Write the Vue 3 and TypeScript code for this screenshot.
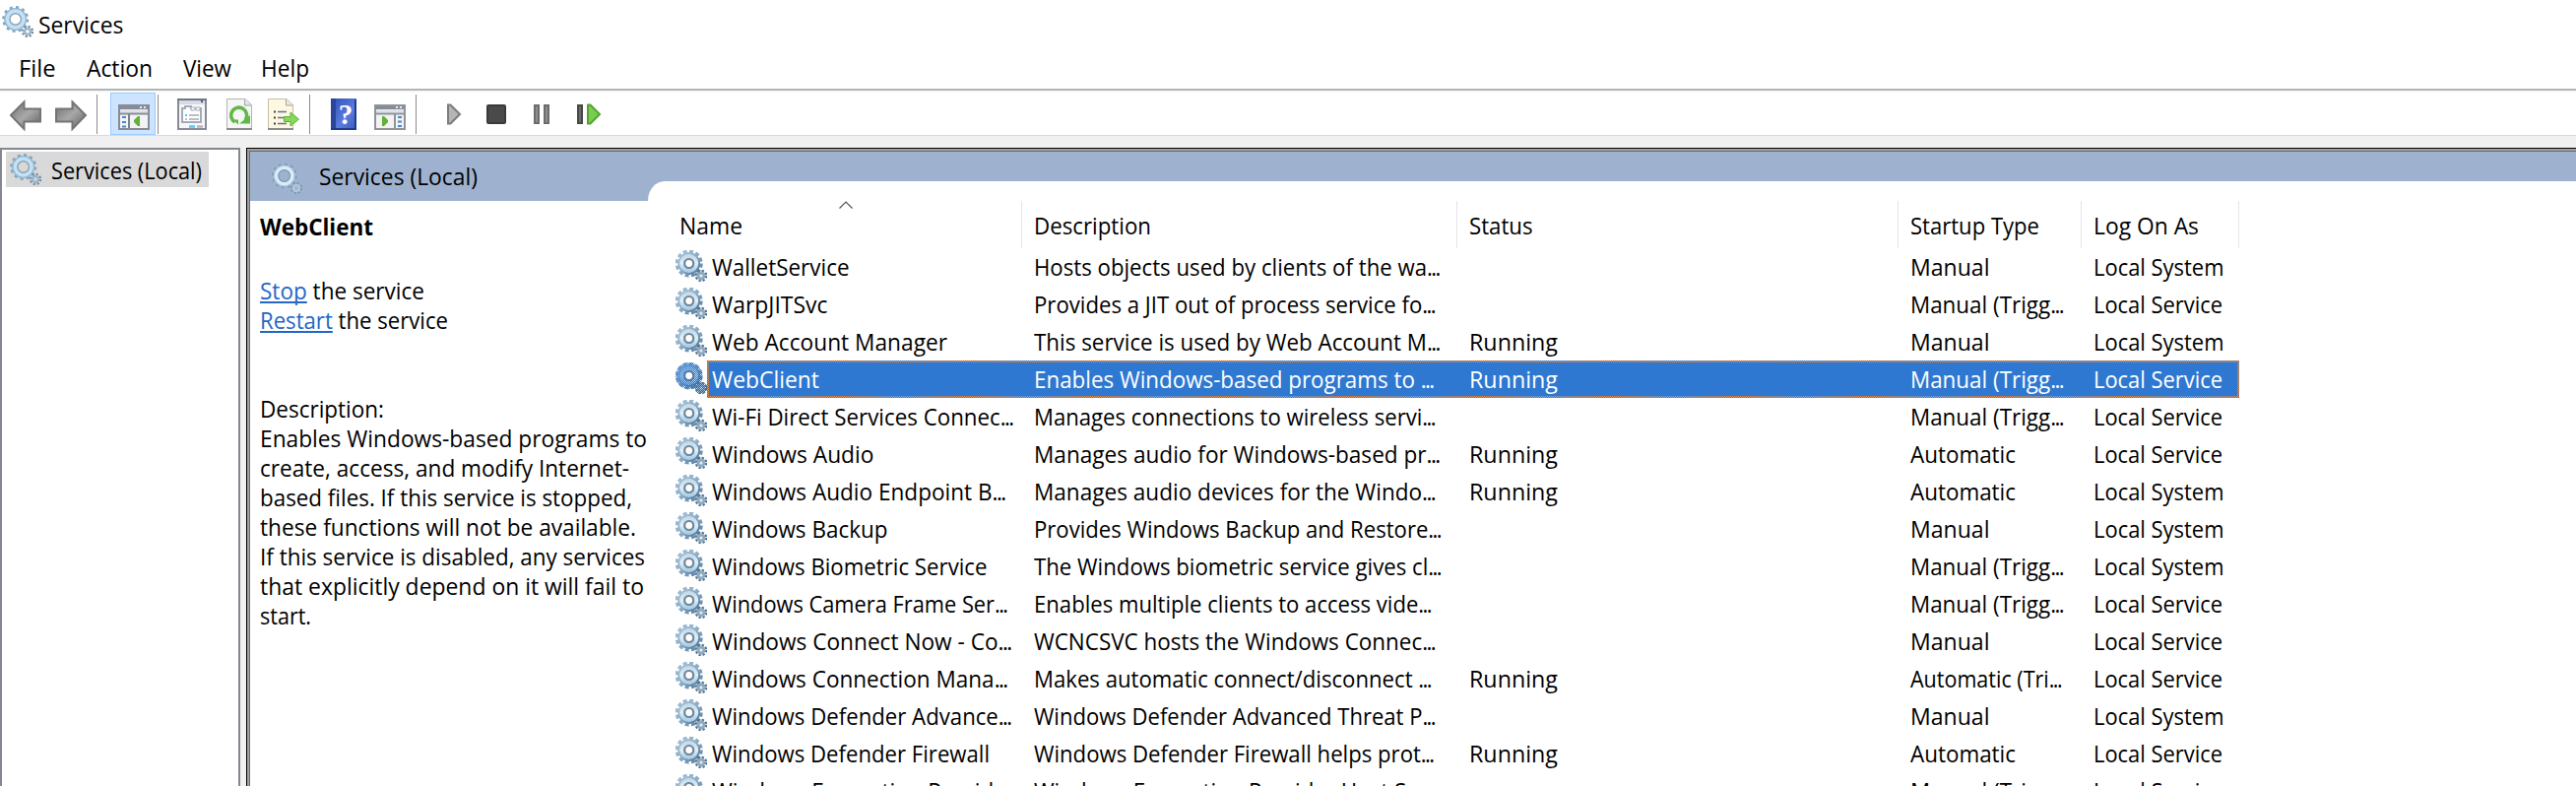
<script setup lang="ts">
import type { Directive } from 'vue'

interface Label { text: string; w: number }
interface Service {
  name: Label
  desc: Label
  running: boolean
  startup: string
  account: string
}

/* Condenses a label horizontally so that it occupies the given width. */
const vFit: Directive<HTMLElement, number> = {
  mounted(el, { value }) {
    const natural = el.getBoundingClientRect().width
    if (natural > 0) el.style.transform = `scaleX(${value / natural})`
  },
}

const body = (t: string) => t.replace(/\.\.\.$/, '')
const cut = (t: string) => t.endsWith('...')

const widths: Record<string, number> = {
  'Manual': 80.5,
  'Manual (Trigg...': 155,
  'Automatic': 107,
  'Automatic (Tri...': 153,
  'Local System': 132.5,
  'Local Service': 131,
}

/* Clipped labels end in narrow dots that carry no trailing space. */
const label = (text: string, w: number): Label => ({ text, w: cut(text) ? w - 2 : w })

const svc = (name: string, nw: number, desc: string, dw: number, running: boolean, startup: string, account: string): Service => ({
  name: label(name, nw),
  desc: label(desc, dw),
  running,
  startup,
  account: `Local ${account}`,
})

const services: Service[] = [
  svc('WalletService', 139.5, 'Hosts objects used by clients of the wa...', 413.7, false, 'Manual', 'System'),
  svc('WarpJITSvc', 117.5, 'Provides a JIT out of process service fo...', 409, false, 'Manual (Trigg...', 'Service'),
  svc('Web Account Manager', 239, 'This service is used by Web Account M...', 413.7, true, 'Manual', 'System'),
  svc('WebClient', 109, 'Enables Windows-based programs to ...', 407.5, true, 'Manual (Trigg...', 'Service'),
  svc('Wi-Fi Direct Services Connec...', 307.5, 'Manages connections to wireless servi...', 409, false, 'Manual (Trigg...', 'Service'),
  svc('Windows Audio', 164.5, 'Manages audio for Windows-based pr...', 413.5, true, 'Automatic', 'Service'),
  svc('Windows Audio Endpoint B...', 299.5, 'Manages audio devices for the Windo...', 409, true, 'Automatic', 'System'),
  svc('Windows Backup', 178.5, 'Provides Windows Backup and Restore...', 415, false, 'Manual', 'System'),
  svc('Windows Biometric Service', 279.5, 'The Windows biometric service gives cl...', 415, false, 'Manual (Trigg...', 'System'),
  svc('Windows Camera Frame Ser...', 301.5, 'Enables multiple clients to access vide...', 405, false, 'Manual (Trigg...', 'Service'),
  svc('Windows Connect Now - Co...', 305.5, 'WCNCSVC hosts the Windows Connec...', 409, false, 'Manual', 'Service'),
  svc('Windows Connection Mana...', 301.5, 'Makes automatic connect/disconnect ...', 405, true, 'Automatic (Tri...', 'Service'),
  svc('Windows Defender Advance...', 305.5, 'Windows Defender Advanced Threat P...', 409, false, 'Manual', 'System'),
  svc('Windows Defender Firewall', 282, 'Windows Defender Firewall helps prot...', 407.5, true, 'Automatic', 'Service'),
  svc('Windows Encryption Provid...', 301, 'Windows Encryption Provider Host S...', 393, false, 'Manual (Trigg...', 'Service'),
]
const selected = 'WebClient'

const details: Label[] = [
  { text: 'Description:', w: 126 },
  { text: 'Enables Windows-based programs to', w: 393 },
  { text: 'create, access, and modify Internet-', w: 375 },
  { text: 'based files. If this service is stopped,', w: 378 },
  { text: 'these functions will not be available.', w: 382 },
  { text: 'If this service is disabled, any services', w: 391 },
  { text: 'that explicitly depend on it will fail to', w: 390 },
  { text: 'start.', w: 52 },
]
</script>

<template>
  <div class="window">
    <svg class="defs" width="0" height="0" aria-hidden="true">
      <defs>
        <linearGradient id="rim" x1="0" y1="0" x2="1" y2="1">
          <stop offset="0" stop-color="#a3bfd6" />
          <stop offset=".5" stop-color="#8babc6" />
          <stop offset="1" stop-color="#587e9f" />
        </linearGradient>
        <linearGradient id="face" x1="0" y1="0" x2="0" y2="1">
          <stop offset="0" stop-color="#c5dcea" />
          <stop offset=".5" stop-color="#dff0f8" />
          <stop offset="1" stop-color="#a9cfe8" />
        </linearGradient>
        <linearGradient id="arrowFill" x1="0" y1="0" x2="1" y2="1">
          <stop offset="0" stop-color="#6e6e6e" />
          <stop offset=".5" stop-color="#a8a8a8" />
          <stop offset="1" stop-color="#5c5c5c" />
        </linearGradient>
        <linearGradient id="bookFill" x1="0" y1="0" x2="1" y2="1">
          <stop offset="0" stop-color="#2f50b4" />
          <stop offset=".6" stop-color="#5b7cdd" />
          <stop offset="1" stop-color="#3457b8" />
        </linearGradient>
        <pattern id="dither" width="2" height="2" patternUnits="userSpaceOnUse">
          <path d="M0 0h1v1H0zM1 1h1v1H1z" fill="#1d6fd0" />
        </pattern>
        <symbol id="gear" viewBox="0 0 32 32">
          <circle cx="13.700" cy="13.500" r="12" fill="none" stroke="url(#rim)" stroke-width="4" stroke-dasharray="3.900 2.380" />
          <circle cx="13.700" cy="13.500" r="8" fill="none" stroke="url(#rim)" stroke-width="6.800" />
          <circle cx="13.700" cy="13.500" r="7.500" fill="none" stroke="url(#face)" stroke-width="4" />
          <circle cx="13.700" cy="13.500" r="4.500" fill="#fff" stroke="#76879a" stroke-width="2.200" />
          <circle cx="26" cy="26" r="5" fill="none" stroke="#54718c" stroke-width="2.600" stroke-dasharray="2.200 1.730" />
          <circle cx="26" cy="26" r="3" fill="#e6eff4" stroke="#8eaabf" stroke-width="3" />
        </symbol>
        <symbol id="gearLight" viewBox="0 0 32 32">
          <circle cx="13.700" cy="13.500" r="12" fill="none" stroke="#86a3bd" stroke-width="3" stroke-dasharray="3 3.280" />
          <circle cx="13.700" cy="13.500" r="8.700" fill="none" stroke="#8fb3d0" stroke-width="5.600" />
          <circle cx="13.700" cy="13.500" r="8.200" fill="none" stroke="#c3e1f4" stroke-width="4" />
          <circle cx="13.700" cy="13.500" r="5.700" fill="none" stroke="#8fa3b5" stroke-width="1.400" />
          <circle cx="26" cy="26" r="5" fill="none" stroke="#6f8ba6" stroke-width="2.400" stroke-dasharray="2 1.930" />
          <circle cx="26" cy="26" r="3" fill="none" stroke="#9db6c9" stroke-width="2.600" />
        </symbol>
        <symbol id="gearPale" viewBox="0 0 32 32">
          <circle cx="13.700" cy="13.500" r="11.600" fill="none" stroke="#7e98b6" stroke-width="2.400" stroke-dasharray="2.600 3.470" />
          <circle cx="13.700" cy="13.500" r="8.500" fill="none" stroke="#a9c6dd" stroke-width="5" />
          <circle cx="13.700" cy="13.500" r="8.200" fill="none" stroke="#d9edf8" stroke-width="3.200" />
          <circle cx="13.700" cy="13.500" r="5.800" fill="none" stroke="#8399b2" stroke-width="1.200" />
          <circle cx="26" cy="26" r="5" fill="none" stroke="#7e98b3" stroke-width="2.400" stroke-dasharray="2 1.930" />
          <circle cx="26" cy="26" r="3" fill="none" stroke="#b3c9da" stroke-width="2.200" />
        </symbol>
      </defs>
    </svg>

    <header class="titlebar">
      <svg class="gear title-icon"><use href="#gearLight" /></svg>
      <span v-fit="86.5" class="t">Services</span>
    </header>

    <nav class="menubar">
      <div class="menu m-file"><span v-fit="37.5" class="t">File</span></div>
      <div class="menu m-action"><span v-fit="67" class="t">Action</span></div>
      <div class="menu m-view"><span v-fit="49" class="t">View</span></div>
      <div class="menu m-help"><span v-fit="49" class="t">Help</span></div>
    </nav>

    <div class="toolbar">
      <svg width="440" height="45" viewBox="0 92 440 45" class="tools-a">
        <!-- back / forward -->
        <path d="M11 117 24.5 103.500V110.500H41V123.500H24.500V131z" fill="url(#arrowFill)" stroke="#747474" stroke-width="2" />
        <path d="M87 117 73.500 103.500V110.500H57V123.500H73.500V131z" fill="url(#arrowFill)" stroke="#747474" stroke-width="2" />
        <path d="M98.500 96v40M160.500 96v40M314.500 96v40M422.500 96v40" stroke="#8c8c8c" />
        <!-- console tree toggle -->
        <rect x="112.500" y="94.500" width="45" height="42" fill="#cce4ff" stroke="#99ccff" />
        <g>
          <rect x="121" y="107" width="30" height="24" fill="#f3f3f3" stroke="#868b96" stroke-width="2" />
          <path d="M122 109.500h28" stroke="#868b96" stroke-width="3" />
          <path d="M142 108h2v2h-2zM146 108h2v2h-2z" fill="#e6eaf5" />
          <path d="M122 113h28" stroke="#dce1ea" stroke-width="3" />
          <path d="M122 115.500h28" stroke="#868b96" stroke-width="2" />
          <path d="M131 116v14" stroke="#7a8190" stroke-width="2" />
          <path d="M124 119h4M124 124h4M124 128.500h4" stroke="#4a86cc" stroke-width="2" />
          <path d="M142 118v10h-2l-4-4v-2l4-4z" fill="#62b03a" />
        </g>
        <!-- properties -->
        <rect x="181" y="101" width="28" height="30" fill="#f7f7f7" stroke="#868b96" stroke-width="2" />
        <path d="M180 101h30" stroke="#6f7882" stroke-width="2" />
        <path d="M182 104h26" stroke="#d7dce4" stroke-width="4" />
        <path d="M204 102h2v2h-2z" fill="#405a86" />
        <path d="M185 110h3v-2h6v2h10v14h-19z" fill="#fff" stroke="#a5aabb" stroke-width="2" />
        <path d="M194 109h4v3h-4zM199 109h4v3h-4z" fill="#fff" stroke="#a5aabb" />
        <path d="M188 117h2" stroke="#56c5f5" stroke-width="2" />
        <path d="M192 117h10M188 121h2M192 121h10" stroke="#a5aaae" stroke-width="1.500" />
        <path d="M192 128.500h6" stroke="#56c5f5" stroke-width="2.500" />
        <path d="M200 128.500h6" stroke="#b6b6b6" stroke-width="2.500" />
        <!-- refresh -->
        <path d="M230.500 100.500H249l6.500 6V131.500h-25z" fill="#f6f6f6" stroke="#b3b3b3" />
        <path d="M230 131h26" stroke="#8a8a8a" stroke-width="2" />
        <path d="M248.500 101v6h7" fill="#e6e6e6" stroke="#a5a5a5" />
        <path d="M238.500 124a8 8 0 1 1 10.500-2" fill="none" stroke="#62b846" stroke-width="3.600" />
        <path d="M243 125.500h11v-8.500z" fill="#62b846" />
        <path d="M236 121.500l6 0v5z" fill="#62b846" />
        <!-- export list -->
        <path d="M272.500 100.500H291l6.500 6V131.500h-25z" fill="#fdf8e2" stroke="#c4bda7" />
        <path d="M272 131h26" stroke="#8e8b85" stroke-width="2" />
        <path d="M290.500 101v6h7" fill="#efe9d6" stroke="#a5a5a5" />
        <path d="M278 113.500h2M278 119.500h2M278 125.500h2" stroke="#444" stroke-width="2" />
        <path d="M282 113.500h9M282 119.500h6M282 125.500h9" stroke="#6b6b86" stroke-width="1.600" />
        <path d="M288.500 118.500h6.500v-4.500l8.500 7-8.500 7v-4.500h-6.500z" fill="#86d95a" stroke="#5cae3b" />
        <!-- help -->
        <path d="M336 100h26v32h-26z" fill="url(#bookFill)" />
        <path d="M336 100h5v32h-5z" fill="#2c449b" />
        <path d="M336 131h26M361 101v30" stroke="#1f3b8c" stroke-width="2" />
        <text x="351" y="126" class="q">?</text>
        <!-- action pane toggle -->
        <g>
          <rect x="381" y="107" width="30" height="24" fill="#f3f3f3" stroke="#8f949a" stroke-width="2" />
          <path d="M382 109.500h28" stroke="#868b96" stroke-width="3" />
          <path d="M402 108h2v2h-2zM406 108h2v2h-2z" fill="#e6eaf5" />
          <path d="M382 113h28" stroke="#dce1ea" stroke-width="3" />
          <path d="M382 115.500h28" stroke="#8f949a" stroke-width="2" />
          <path d="M401 116v14" stroke="#8f949a" stroke-width="2" />
          <path d="M404 119h4M404 123.500h4M404 128h4" stroke="#4a86cc" stroke-width="2" />
          <path d="M388 118v10h2l4-4v-2l-4-4z" fill="#62b03a" />
        </g>
      </svg>
      <svg width="200" height="45" viewBox="440 92 200 45" class="tools-b">
        <path d="M455 106.500v19h2.500L467 116l-9.500-9.500z" fill="#b5b5b5" stroke="#7c7c7c" stroke-width="2" />
        <rect x="495" y="107" width="18" height="18" rx="1" fill="#4a4a4a" stroke="#3a3a3a" stroke-width="2" />
        <path d="M543 107h4v18h-4zM553 107h4v18h-4z" fill="#8e8e8e" stroke="#6c6c6c" stroke-width="2" />
        <path d="M587 107h4v18h-4z" fill="#6a6a6a" stroke="#484848" stroke-width="2" />
        <path d="M597 106.500v19h2.500L609 116l-9.500-9.500z" fill="#78cf4e" stroke="#55a332" stroke-width="2" />
      </svg>
    </div>

    <main class="workspace">
      <aside class="tree">
        <div class="tree-item">
          <svg class="gear"><use href="#gearLight" /></svg>
          <span v-fit="153" class="t">Services (Local)</span>
        </div>
      </aside>

      <section class="pane">
        <div class="banner">
          <div class="banner-label">
            <svg class="gear"><use href="#gearPale" /></svg>
            <span v-fit="161" class="t">Services (Local)</span>
          </div>
          <div class="tab-edge"></div>
        </div>

        <div class="content">
          <div class="info">
            <h2><span v-fit="115" class="t">WebClient</span></h2>
            <p class="actions">
              <span v-fit="167" class="t"><a>Stop</a> the service</span>
              <span v-fit="191" class="t"><a>Restart</a> the service</span>
            </p>
            <p class="details">
              <span v-for="d in details" :key="d.text" v-fit="d.w" class="t">{{ d.text }}</span>
            </p>
          </div>

          <div class="list">
            <div class="head">
              <div class="th th-name">
                <svg class="sort" width="14" height="8" viewBox="0 0 14 8"><path d="M.5 7.500 7 1l6.500 6.500" fill="none" stroke="#555" stroke-width="1.200" /></svg>
                <span v-fit="64" class="t">Name</span>
              </div>
              <div class="th"><span v-fit="119" class="t">Description</span></div>
              <div class="th"><span v-fit="64.500" class="t">Status</span></div>
              <div class="th"><span v-fit="131" class="t">Startup Type</span></div>
              <div class="th"><span v-fit="107" class="t">Log On As</span></div>
            </div>

            <div v-for="s in services" :key="s.name.text" class="row" :class="{ selected: s.name.text === selected }">
              <svg class="gear" viewBox="0 0 32 32">
                <use href="#gear" />
                <template v-if="s.name.text === selected">
                  <circle cx="13.700" cy="13.500" r="8.800" fill="none" stroke="url(#dither)" stroke-width="9.600" />
                  <circle cx="26" cy="26" r="6" fill="url(#dither)" />
                </template>
              </svg>
              <div class="cells">
                <div class="td"><span v-fit="s.name.w" class="t">{{ body(s.name.text) }}<i v-if="cut(s.name.text)">...</i></span></div>
                <div class="td"><span v-fit="s.desc.w" class="t">{{ body(s.desc.text) }}<i v-if="cut(s.desc.text)">...</i></span></div>
                <div class="td"><span v-if="s.running" v-fit="90" class="t">Running</span></div>
                <div class="td"><span v-fit="widths[s.startup]" class="t">{{ body(s.startup) }}<i v-if="cut(s.startup)">...</i></span></div>
                <div class="td"><span v-fit="widths[s.account]" class="t">{{ s.account }}</span></div>
              </div>
            </div>
          </div>
        </div>
      </section>
    </main>
  </div>
</template>

<style>
body {
  margin: 0;
  overflow: hidden;
}
</style>

<style scoped>
.window {
  width: 2616px;
  height: 798px;
  overflow: hidden;
  display: flex;
  flex-direction: column;
  background: #fff;
  color: #000;
  font-family: "Open Sans", "Noto Sans", sans-serif;
  font-size: 23.5px;
  line-height: 38px;
}
.defs {
  position: absolute;
}
.t {
  display: inline-block;
  flex: none;
  white-space: pre;
  transform-origin: 0 50%;
}
.t i {
  font-style: normal;
  letter-spacing: -1.7px;
}
.gear {
  width: 32px;
  height: 32px;
  flex: none;
}

.titlebar {
  height: 50px;
  box-sizing: border-box;
  padding: 6px 0 0 2px;
  display: flex;
}
.title-icon {
  margin: 0 5px 0 0;
}
.menubar {
  display: flex;
  height: 40px;
  box-sizing: content-box;
  padding-left: 19px;
  border-bottom: 2px solid #b4b4b4;
  line-height: 39px;
}
.m-file { width: 69px; }
.m-action { width: 98px; }
.m-view { width: 79px; }

.toolbar {
  height: 45px;
  display: flex;
  border-bottom: 1px solid #d9d9d9;
  background: linear-gradient(#f5f9fe 0 2px, #fff 2px);
}
.toolbar svg {
  display: block;
}
.q {
  font: bold 29px "Liberation Serif", serif;
  fill: #fff;
  text-anchor: middle;
}

.workspace {
  flex: 1;
  min-height: 0;
  display: flex;
  padding-top: 12px;
  background: #f0f0f0;
}
.tree {
  width: 240px;
  border: 2px solid #828790;
  border-bottom: 0;
  background: #fff;
  margin-right: 6px;
  flex: none;
}
.tree-item {
  width: 206px;
  height: 36px;
  box-sizing: border-box;
  margin: 2px 0 0 4px;
  padding-left: 4px;
  display: flex;
  background: #d9d9d9;
}
.tree-item .gear {
  margin: 2px 10px 0 0;
}
.pane {
  flex: 1;
  min-width: 0;
  display: flex;
  flex-direction: column;
  border: solid #6b6b6b;
  border-width: 1px 0 0 1px;
  box-shadow: 0 0 0 2px #a0a0a0, 0 0 0 3px #000;
  margin: 3px 0 0 3px;
  background: #fff;
}
.banner {
  height: 50px;
  flex: none;
  display: flex;
  align-items: flex-end;
  background: #9eb2cf;
}
.banner-label {
  width: 404px;
  height: 50px;
  box-sizing: border-box;
  padding: 6px 0 0 21px;
  display: flex;
}
.banner-label .gear {
  margin: 5px 17px 0 0;
}
.tab-edge {
  flex: 1;
  height: 20px;
  background: #fff;
  border-top-left-radius: 17px 20px;
}
.content {
  flex: 1;
  min-height: 0;
  display: flex;
}
.info {
  width: 404px;
  flex: none;
  box-sizing: border-box;
  padding: 11px 0 0 10px;
  line-height: 30px;
}
.info .t {
  display: block;
  width: max-content;
}
h2 {
  margin: 0 0 35px;
  font-size: 23.5px;
  font-weight: 700;
}
.actions {
  margin: 0;
}
.details {
  margin: 60px 0 0;
}
a {
  color: #2566c8;
  text-decoration: underline;
  text-decoration-thickness: 2px;
  text-underline-offset: 2px;
  text-decoration-skip-ink: none;
}

.list {
  flex: 1;
  min-width: 0;
}
.head {
  height: 48px;
  display: grid;
  grid-template-columns: 380px 442px 448px 186px 160px;
}
.th {
  position: relative;
  padding: 7px 0 0 12px;
  border-right: 1px solid #e5e5e5;
  line-height: 37px;
}
.th-name {
  padding-left: 32px;
}
.sort {
  position: absolute;
  left: 194px;
  top: 0;
}
.row {
  display: flex;
  height: 38px;
  padding-left: 28px;
}
.row .gear {
  margin-top: 2px;
}
.cells {
  width: 1556px;
  height: 38px;
  box-sizing: border-box;
  display: grid;
  grid-template-columns: 318px 442px 448px 186px 158px;
  border: 2px solid transparent;
  line-height: 35px;
}
.td {
  padding-left: 12px;
}
.td:first-child {
  padding-left: 2.5px;
}
.selected .cells {
  color: #fff;
  background:
    linear-gradient(#2f78d1, #2f78d1) padding-box,
    repeating-conic-gradient(#e58a45 0 25%, #3a7bc8 0 50%) 0 0 / 2px 2px border-box;
}
</style>
